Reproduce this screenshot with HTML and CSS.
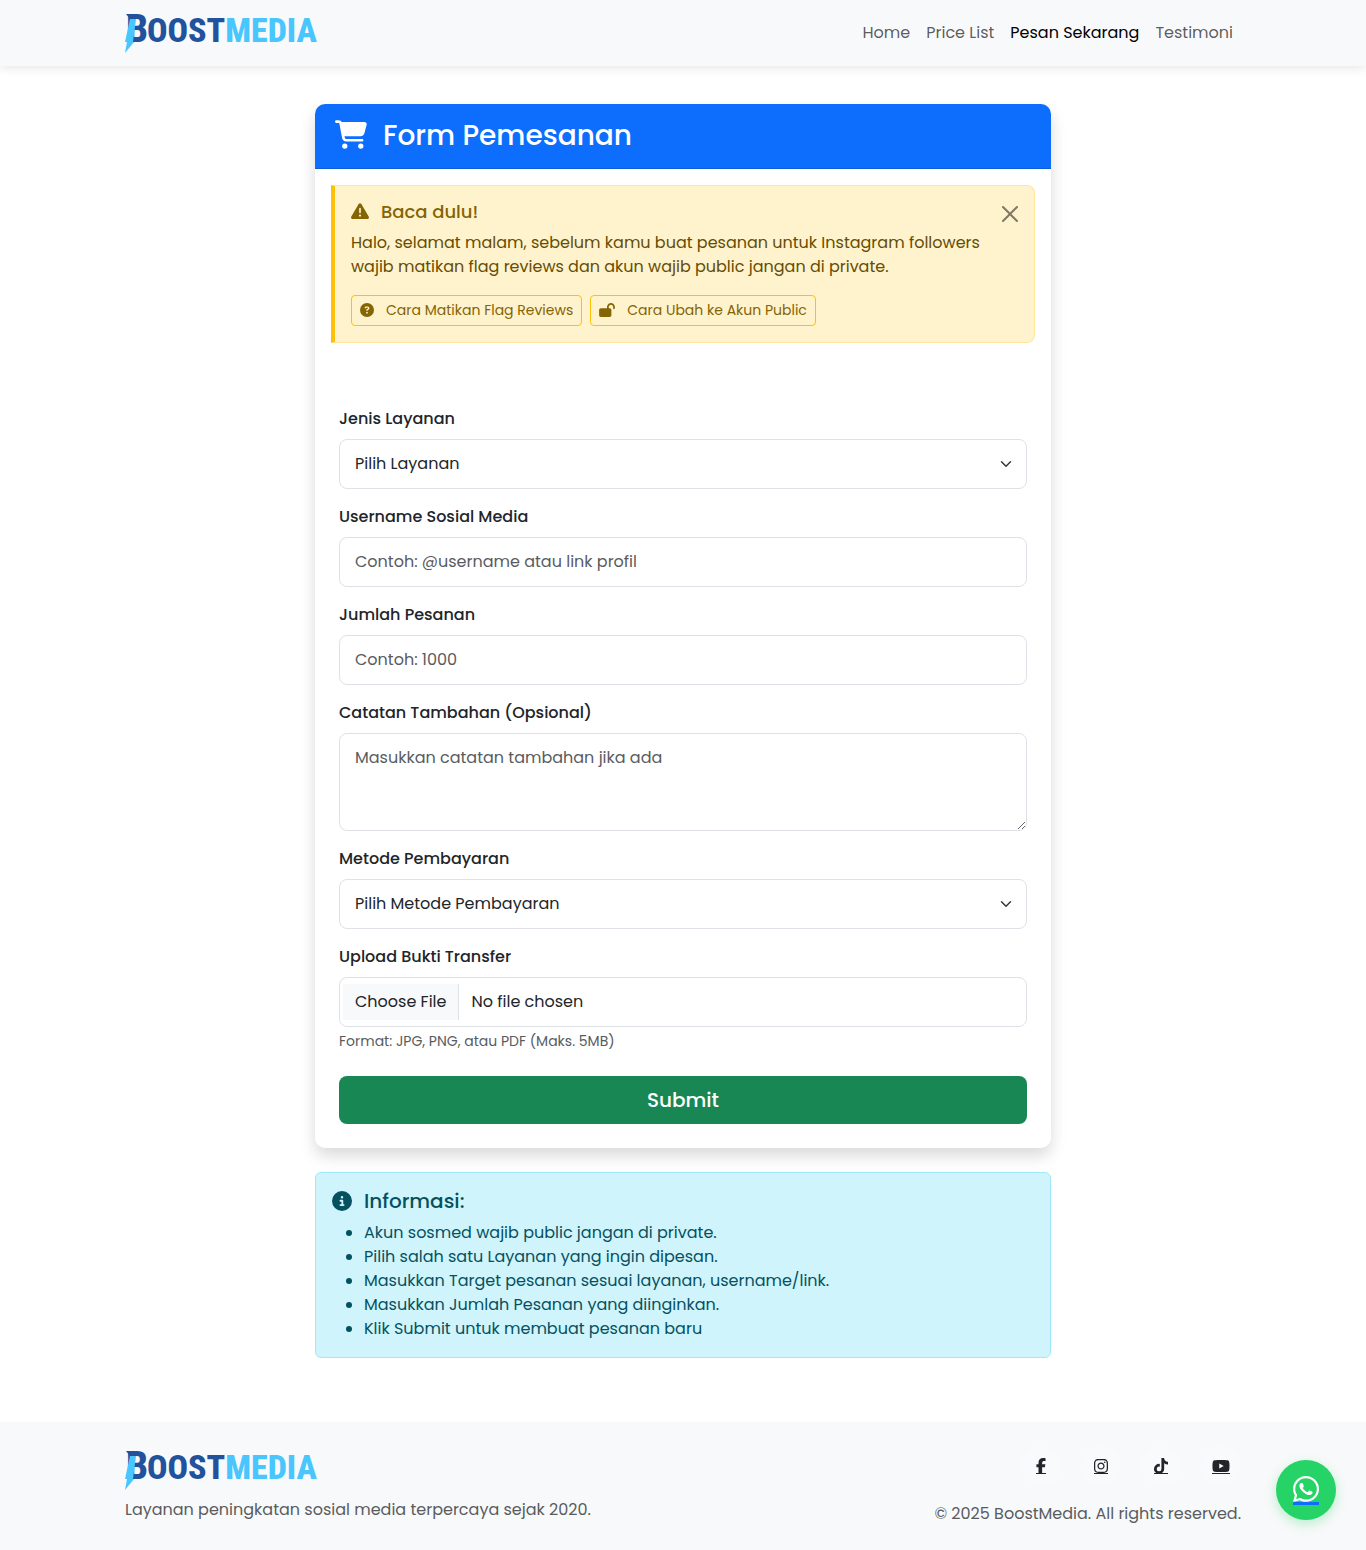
FILE: index.html
```html
<!DOCTYPE html>
<html lang="id">
<head>
  <meta charset="utf-8">
  <meta name="viewport" content="width=device-width, initial-scale=1">
  <title>BoostMedia - Form Pemesanan</title>
  <link rel="stylesheet" href="styles.css">
</head>
<body>
  <header class="navbar">
    <div class="container navbar-inner">
      <a class="brand" href="#" aria-label="BoostMedia">
        <svg class="logo" viewBox="0 0 196 44">
          <text class="logo-dark logo-initial" x="1" y="31">B</text>
          <text class="logo-dark" x="22" y="31">OOST<tspan class="logo-light">MEDIA</tspan></text>
          <path class="logo-dark" d="M1 3h9v5H5z"/>
          <path class="logo-light" d="M5 8h6L8 31h1L0 42l2-11H0z"/>
        </svg>
      </a>
      <nav class="nav">
        <a class="nav-link" href="#">Home</a>
        <a class="nav-link" href="#">Price List</a>
        <a class="nav-link active" href="#" aria-current="page">Pesan Sekarang</a>
        <a class="nav-link" href="#">Testimoni</a>
      </nav>
    </div>
  </header>

  <main class="container main">
    <section class="card">
      <h1 class="card-header">
        <svg class="icon-cart" viewBox="0 0 576 512"><path d="M0 24C0 10.7 10.7 0 24 0H69.5c22 0 41.5 12.8 50.6 32h411c26.3 0 45.5 25 38.6 50.4l-41 152.3c-8.5 31.4-37 53.3-69.5 53.3H170.7l5.4 28.5c2.2 11.3 12.1 19.5 23.6 19.5H488c13.3 0 24 10.7 24 24s-10.7 24-24 24H199.7c-34.6 0-64.3-24.6-70.7-58.5L77.4 54.5c-.7-3.8-4-6.5-7.9-6.5H24C10.7 48 0 37.3 0 24zM128 464a48 48 0 1 1 96 0 48 48 0 1 1 -96 0zm336-48a48 48 0 1 1 0 96 48 48 0 1 1 0-96z"/></svg>
        Form Pemesanan
      </h1>

      <div class="alert alert-warning" role="alert">
        <div class="alert-body">
          <h2 class="warning-title">
            <svg class="icon-warning" viewBox="0 0 512 512"><path d="M256 32c14.2 0 27.3 7.5 34.5 19.8l216 368c7.3 12.4 7.3 27.7 .2 40.1S486.3 480 472 480H40c-14.3 0-27.6-7.7-34.7-20.1s-7-27.8 .2-40.1l216-368C228.7 39.5 241.8 32 256 32zm0 128c-13.3 0-24 10.7-24 24V296c0 13.3 10.7 24 24 24s24-10.7 24-24V184c0-13.3-10.7-24-24-24zm32 224a32 32 0 1 0 -64 0 32 32 0 1 0 64 0z"/></svg>
            Baca dulu!
          </h2>
          <p class="warning-text">Halo, selamat malam, sebelum kamu buat pesanan untuk Instagram followers wajib matikan flag reviews dan akun wajib public jangan di private.</p>
          <div class="warning-actions">
            <a class="btn-outline" href="#">
              <svg class="icon-small" viewBox="0 0 512 512"><path d="M256 512A256 256 0 1 0 256 0a256 256 0 1 0 0 512zM169.8 165.3c7.9-22.3 29.1-37.3 52.8-37.3h58.3c34.9 0 63.1 28.3 63.1 63.1c0 22.6-12.1 43.5-31.7 54.8L280 264.4c-.2 13-10.9 23.6-24 23.6c-13.3 0-24-10.7-24-24V250.5c0-8.6 4.6-16.5 12.1-20.8l44.3-25.4c4.7-2.7 7.6-7.7 7.6-13.1c0-8.4-6.8-15.1-15.1-15.1H222.6c-3.4 0-6.4 2.1-7.5 5.3l-.4 1.2c-4.4 12.5-18.2 19-30.6 14.6s-19-18.2-14.6-30.6l.4-1.2zM224 352a32 32 0 1 1 64 0 32 32 0 1 1 -64 0z"/></svg>
              Cara Matikan Flag Reviews
            </a>
            <a class="btn-outline" href="#">
              <svg class="icon-small icon-wide" viewBox="0 0 576 512"><path d="M352 144c0-44.2 35.8-80 80-80s80 35.8 80 80v48c0 17.7 14.3 32 32 32s32-14.3 32-32V144C576 64.5 511.5 0 432 0S288 64.5 288 144v48H64c-35.3 0-64 28.7-64 64V448c0 35.3 28.7 64 64 64H384c35.3 0 64-28.7 64-64V256c0-35.3-28.7-64-64-64H352V144z"/></svg>
              Cara Ubah ke Akun Public
            </a>
          </div>
        </div>
        <button class="btn-close" type="button" aria-label="Close">
          <svg class="icon-close" viewBox="0 0 16 16"><path d="M.293.293a1 1 0 0 1 1.414 0L8 6.586 14.293.293a1 1 0 1 1 1.414 1.414L9.414 8l6.293 6.293a1 1 0 0 1-1.414 1.414L8 9.414l-6.293 6.293a1 1 0 0 1-1.414-1.414L6.586 8 .293 1.707a1 1 0 0 1 0-1.414z"/></svg>
        </button>
      </div>

      <form class="form">
        <div class="field">
          <label class="label" for="layanan">Jenis Layanan</label>
          <select class="control select" id="layanan"><option>Pilih Layanan</option></select>
        </div>
        <div class="field">
          <label class="label" for="username">Username Sosial Media</label>
          <input class="control" id="username" type="text" placeholder="Contoh: @username atau link profil">
        </div>
        <div class="field">
          <label class="label" for="jumlah">Jumlah Pesanan</label>
          <input class="control" id="jumlah" type="number" placeholder="Contoh: 1000">
        </div>
        <div class="field">
          <label class="label" for="catatan">Catatan Tambahan (Opsional)</label>
          <textarea class="control textarea" id="catatan" rows="3" placeholder="Masukkan catatan tambahan jika ada"></textarea>
        </div>
        <div class="field">
          <label class="label" for="metode">Metode Pembayaran</label>
          <select class="control select" id="metode"><option>Pilih Metode Pembayaran</option></select>
        </div>
        <div class="field">
          <label class="label" for="bukti">Upload Bukti Transfer</label>
          <input class="control file" id="bukti" type="file" aria-describedby="bukti-help">
          <small class="help" id="bukti-help">Format: JPG, PNG, atau PDF (Maks. 5MB)</small>
        </div>
        <button class="btn-submit" type="submit">Submit</button>
      </form>
    </section>

    <section class="alert alert-info">
      <h2 class="info-title">
        <svg class="icon-info" viewBox="0 0 512 512"><path d="M256 512A256 256 0 1 0 256 0a256 256 0 1 0 0 512zM216 336h24V272H216c-13.3 0-24-10.7-24-24s10.7-24 24-24h48c13.3 0 24 10.7 24 24v88h8c13.3 0 24 10.7 24 24s-10.7 24-24 24H216c-13.3 0-24-10.7-24-24s10.7-24 24-24zm40-208a32 32 0 1 1 0 64 32 32 0 1 1 0-64z"/></svg>
        Informasi:
      </h2>
      <ul class="info-list">
        <li>Akun sosmed wajib public jangan di private.</li>
        <li>Pilih salah satu Layanan yang ingin dipesan.</li>
        <li>Masukkan Target pesanan sesuai layanan, username/link.</li>
        <li>Masukkan Jumlah Pesanan yang diinginkan.</li>
        <li>Klik Submit untuk membuat pesanan baru</li>
      </ul>
    </section>
  </main>

  <footer class="footer">
    <div class="container footer-inner">
      <div class="footer-brand">
        <svg class="logo" viewBox="0 0 196 44" role="img" aria-label="BoostMedia">
          <text class="logo-dark logo-initial" x="1" y="31">B</text>
          <text class="logo-dark" x="22" y="31">OOST<tspan class="logo-light">MEDIA</tspan></text>
          <path class="logo-dark" d="M1 3h9v5H5z"/>
          <path class="logo-light" d="M5 8h6L8 31h1L0 42l2-11H0z"/>
        </svg>
        <p class="footer-text">Layanan peningkatan sosial media terpercaya sejak 2020.</p>
      </div>
      <div class="footer-side">
        <div class="social">
          <a class="social-link" href="#" aria-label="Facebook"><svg class="icon-social" viewBox="0 0 320 512"><path d="M80 299.3V512H196V299.3h86.5l18-97.8H196V166.9c0-51.7 20.3-71.5 72.7-71.5c16.3 0 29.4 .4 37 1.2V7.9C291.4 4 256.4 0 236.2 0C129.3 0 80 50.5 80 159.4v42.1H14v97.8H80z"/></svg></a>
          <a class="social-link" href="#" aria-label="Instagram"><svg class="icon-social" viewBox="0 0 448 512"><path d="M224.1 141c-63.6 0-114.9 51.3-114.9 114.9s51.3 114.9 114.9 114.9S339 319.5 339 255.9 287.7 141 224.1 141zm0 189.6c-41.1 0-74.7-33.5-74.7-74.7s33.5-74.7 74.7-74.7 74.7 33.5 74.7 74.7-33.6 74.7-74.7 74.7zm146.4-194.3c0 14.9-12 26.8-26.8 26.8-14.9 0-26.8-12-26.8-26.8s12-26.8 26.8-26.8 26.8 12 26.8 26.8zm76.1 27.2c-1.7-35.9-9.9-67.7-36.2-93.9-26.2-26.2-58-34.4-93.9-36.2-37-2.1-147.9-2.1-184.9 0-35.8 1.7-67.6 9.9-93.9 36.1s-34.4 58-36.2 93.9c-2.1 37-2.1 147.9 0 184.9 1.7 35.9 9.9 67.7 36.2 93.9s58 34.4 93.9 36.2c37 2.1 147.9 2.1 184.9 0 35.9-1.7 67.7-9.9 93.9-36.2 26.2-26.2 34.4-58 36.2-93.9 2.1-37 2.1-147.8 0-184.8zM398.8 388c-7.8 19.6-22.9 34.7-42.6 42.6-29.5 11.7-99.5 9-132.1 9s-102.7 2.6-132.1-9c-19.6-7.8-34.7-22.9-42.6-42.6-11.7-29.5-9-99.5-9-132.1s-2.6-102.7 9-132.1c7.8-19.6 22.9-34.7 42.6-42.6 29.5-11.7 99.5-9 132.1-9s102.7-2.6 132.1 9c19.6 7.8 34.7 22.9 42.6 42.6 11.7 29.5 9 99.5 9 132.1s2.7 102.7-9 132.1z"/></svg></a>
          <a class="social-link" href="#" aria-label="TikTok"><svg class="icon-social" viewBox="0 0 448 512"><path d="M448 209.9a210.1 210.1 0 0 1 -122.8-39.3V349.4A162.6 162.6 0 1 1 185 188.3V278.2a74.6 74.6 0 1 0 52.2 71.2V0l88 0a121.2 121.2 0 0 0 1.9 22.2h0A122.2 122.2 0 0 0 381 102.4a121.4 121.4 0 0 0 67 20.1z"/></svg></a>
          <a class="social-link" href="#" aria-label="YouTube"><svg class="icon-social" viewBox="0 0 576 512"><path d="M549.7 124.1c-6.3-23.7-24.8-42.3-48.3-48.6C458.8 64 288 64 288 64S117.2 64 74.6 75.5c-23.5 6.3-42 24.9-48.3 48.6-11.4 42.9-11.4 132.3-11.4 132.3s0 89.4 11.4 132.3c6.3 23.7 24.8 41.5 48.3 47.8C117.2 448 288 448 288 448s170.8 0 213.4-11.5c23.5-6.3 42-24.2 48.3-47.8 11.4-42.9 11.4-132.3 11.4-132.3s0-89.4-11.4-132.3zm-317.5 213.5V175.2l142.7 81.2-142.7 81.2z"/></svg></a>
        </div>
        <p class="footer-text">© 2025 BoostMedia. All rights reserved.</p>
      </div>
    </div>
  </footer>

  <a class="whatsapp" href="#" aria-label="WhatsApp">
    <svg class="icon-whatsapp" viewBox="0 32 448 448"><path d="M380.9 97.1C339 55.1 283.2 32 223.9 32c-122.4 0-222 99.6-222 222 0 39.1 10.2 77.3 29.6 111L0 480l117.7-30.9c32.4 17.7 68.9 27 106.1 27h.1c122.3 0 224.1-99.6 224.1-222 0-59.3-25.2-115-67.1-157zm-157 341.6c-33.2 0-65.7-8.9-94-25.7l-6.7-4-69.8 18.3L72 359.2l-4.4-7c-18.5-29.4-28.2-63.3-28.2-98.2 0-101.7 82.8-184.5 184.6-184.5 49.3 0 95.6 19.2 130.4 54.1 34.8 34.9 56.2 81.2 56.1 130.5 0 101.8-84.9 184.6-186.6 184.6zm101.2-138.2c-5.5-2.8-32.8-16.2-37.9-18-5.1-1.9-8.8-2.8-12.5 2.8-3.7 5.6-14.3 18-17.6 21.8-3.2 3.7-6.5 4.2-12 1.4-32.6-16.3-54-29.1-75.5-66-5.7-9.8 5.7-9.1 16.3-30.3 1.8-3.7 .9-6.9-.5-9.7-1.4-2.8-12.5-30.1-17.1-41.2-4.5-10.8-9.1-9.3-12.5-9.5-3.2-.2-6.9-.2-10.6-.2-3.7 0-9.7 1.4-14.8 6.9-5.1 5.6-19.4 19-19.4 46.3 0 27.3 19.9 53.7 22.6 57.4 2.8 3.7 39.1 59.7 94.8 83.8 35.2 15.2 49 16.5 66.6 13.9 10.7-1.6 32.8-13.4 37.4-26.4 4.6-13 4.6-24.1 3.2-26.4-1.3-2.5-5-3.9-10.5-6.6z"/></svg>
  </a>
</body>
</html>
```
FILE: styles.css
```css
*, *::before, *::after { box-sizing: border-box; }

body {
  margin: 0;
  font-family: Poppins, Inter, sans-serif;
  font-size: 16px;
  line-height: 24px;
  color: #212529;
  background: #fff;
}

h1, h2, p, ul { margin: 0; }
svg { display: block; flex: none; fill: currentColor; }

.container {
  width: 100%;
  max-width: 1140px;
  margin: 0 auto;
  padding: 0 12px;
}

/* Navbar */
.navbar {
  background: #f8f9fa;
  box-shadow: 0 2px 10px rgba(0, 0, 0, .1);
}
.navbar-inner {
  display: flex;
  align-items: center;
  justify-content: space-between;
  min-height: 66px;
}
.logo {
  width: 196px;
  height: 44px;
  overflow: visible;
  font: 800 34px "Roboto Condensed", "Liberation Sans Narrow", sans-serif;
}
.logo-initial { font-size: 39px; }
.logo-dark { fill: #22529c; }
.logo-light { fill: #48c6fd; }
.nav { display: flex; }
.nav-link {
  padding: 8px;
  color: rgba(0, 0, 0, .65);
  text-decoration: none;
}
.nav-link.active { color: #000; }

/* Order card */
.main {
  max-width: 760px;
  padding-top: 38px;
  padding-bottom: 64px;
}
.card {
  margin-bottom: 24px;
  border-radius: 10px;
  background: #fff;
  box-shadow: 0 8px 16px rgba(0, 0, 0, .15);
  overflow: hidden;
}
.card-header {
  display: flex;
  align-items: flex-start;
  gap: 16px;
  padding: 16px 20px;
  border-bottom: 1px solid #0b5ed7;
  background: #0d6efd;
  color: #fff;
  font-size: 28px;
  line-height: 32px;
  font-weight: 500;
}
.icon-cart { width: 32px; height: 29px; }

/* Alerts */
.alert {
  padding: 16px;
  border: 1px solid;
  border-radius: 6px;
}
.alert-warning {
  display: flex;
  align-items: flex-start;
  margin: 16px;
  border-color: #ffe69c;
  border-left: 4px solid #ffc107;
  border-radius: 0 8px 8px 0;
  background: #fff3cd;
  color: #664d03;
}
.alert-body { flex: 1; }
.warning-title {
  display: flex;
  align-items: flex-start;
  gap: 12px;
  margin-bottom: 9px;
  color: #856404;
  font-size: 18px;
  line-height: 20px;
  font-weight: 500;
}
.icon-warning { width: 18px; height: 18px; }
.warning-text { margin-bottom: 16px; }
.warning-actions { display: flex; flex-wrap: wrap; gap: 8px; }
.btn-outline {
  display: flex;
  align-items: flex-start;
  gap: 12px;
  padding: 4px 8px;
  border: 1px solid #ffc107;
  border-radius: 4px;
  color: #856404;
  font-size: 14px;
  line-height: 21px;
  text-decoration: none;
}
.icon-small { width: 14px; height: 14px; margin-top: 3px; }
.icon-wide { width: 16px; }
.btn-close {
  padding: 4px 0;
  border: 0;
  background: none;
  color: #000;
  opacity: .5;
  cursor: pointer;
}
.icon-close { width: 16px; height: 16px; }

.alert-info {
  border-color: #9eeaf9;
  background: #cff4fc;
  color: #055160;
}
.info-title {
  display: flex;
  align-items: center;
  gap: 12px;
  margin-bottom: 8px;
  font-size: 20px;
  line-height: 24px;
  font-weight: 500;
}
.icon-info { width: 20px; height: 20px; }
.info-list { padding-left: 32px; }

/* Form */
.form { padding: 48px 24px 24px; }
.field { margin-bottom: 16px; }
.label {
  display: block;
  margin-bottom: 8px;
  font-weight: 500;
}
.control {
  display: block;
  width: 100%;
  padding: 12px 15px;
  border: 1px solid #dee2e6;
  border-radius: 8px;
  background: #fff;
  color: #212529;
  font: inherit;
  appearance: none;
}
.control::placeholder { color: #595c5f; opacity: 1; }
.select {
  background: #fff url("data:image/svg+xml,%3Csvg xmlns='http://www.w3.org/2000/svg' viewBox='0 0 16 16'%3E%3Cpath fill='none' stroke='%23343a40' stroke-linecap='round' stroke-linejoin='round' stroke-width='2' d='m2 5 6 6 6-6'/%3E%3C/svg%3E") no-repeat right 14px center / 12px 12px;
}
.textarea { resize: vertical; }
.file { overflow: hidden; }
.file::file-selector-button {
  margin: -6px 12px -6px -12px;
  padding: 6px 12px;
  border: 0 solid #dee2e6;
  border-right-width: 1px;
  background: #f8f9fa;
  color: #212529;
  font: inherit;
}
.help {
  display: block;
  margin: 4px 0 24px;
  color: #595c5f;
  font-size: 14px;
  line-height: 21px;
}
.btn-submit {
  display: block;
  width: 100%;
  padding: 12px;
  border: 0;
  border-radius: 8px;
  background: #198754;
  color: #fff;
  font: inherit;
  font-size: 20px;
  font-weight: 500;
  cursor: pointer;
}

/* Footer */
.footer { padding: 24px 0; background: #f8f9fa; }
.footer-inner { display: flex; justify-content: space-between; }
.footer-brand { padding-top: 2px; }
.footer-brand .logo { margin-bottom: 6px; }
.footer-text { color: #595c5f; }
.footer-side { text-align: right; }
.social {
  display: flex;
  justify-content: flex-end;
  gap: 20px;
  margin-bottom: 16px;
}
.social-link {
  display: flex;
  align-items: center;
  justify-content: center;
  width: 40px;
  height: 40px;
  border-radius: 50%;
  background: #f9fafb;
  color: #212529;
}
.icon-social {
  height: 16px;
  background: linear-gradient(currentColor, currentColor) bottom / 100% 1px no-repeat;
}

.whatsapp {
  position: fixed;
  right: 30px;
  bottom: 30px;
  display: flex;
  align-items: center;
  justify-content: center;
  width: 60px;
  height: 60px;
  border-radius: 50%;
  background: #25d366;
  box-shadow: 0 4px 12px rgba(37, 211, 102, .3);
  color: #fff;
}
.icon-whatsapp {
  width: 26px;
  height: 29px;
  border-bottom: 3px solid #0d6efd;
}
```
